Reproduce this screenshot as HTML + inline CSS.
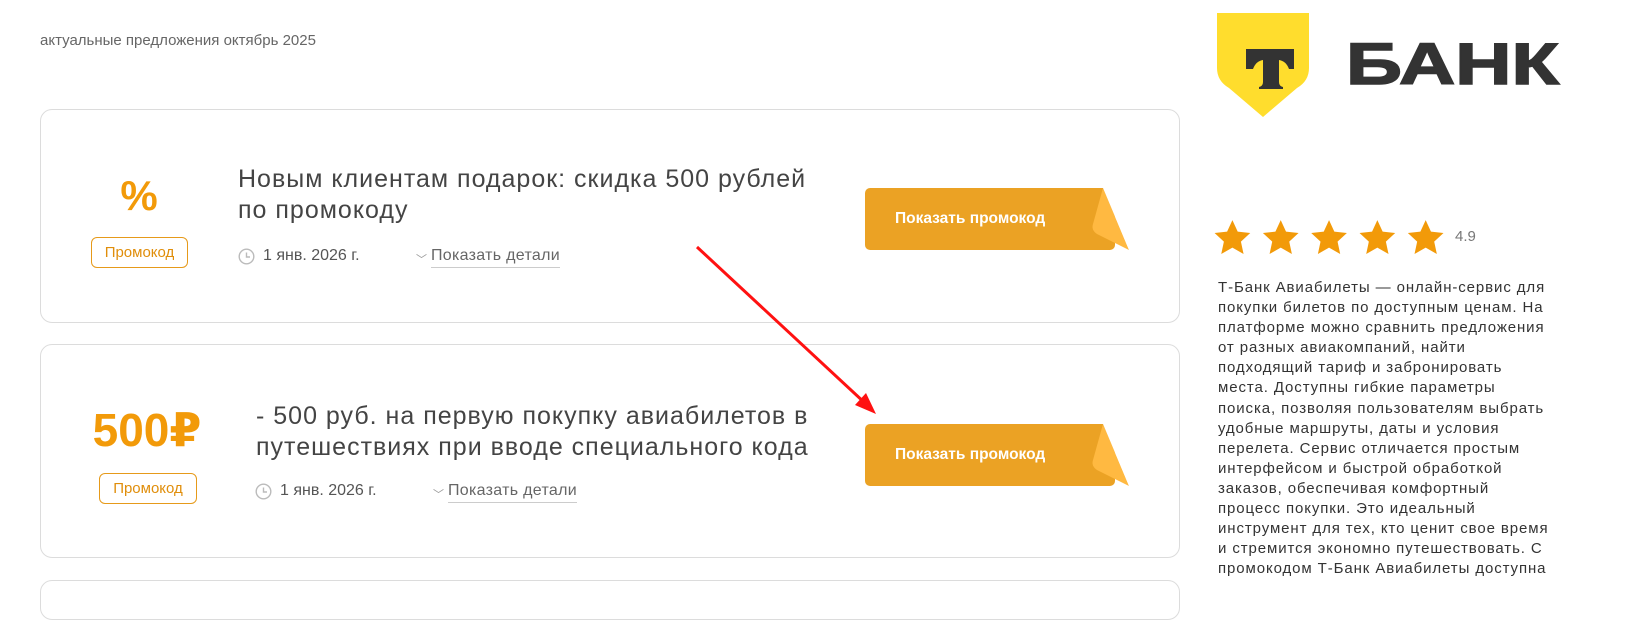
<!DOCTYPE html>
<html lang="ru"><head><meta charset="utf-8">
<style>
*{margin:0;padding:0;box-sizing:border-box}
body{width:1635px;height:581px;overflow:hidden;background:#fff;font-family:"Liberation Sans","DejaVu Sans",sans-serif;position:relative;color:#444}
.abs{position:absolute}
.card{position:absolute;left:40px;width:1140px;border:1px solid #dcdcdc;border-radius:12px;background:#fff}
.badge{position:absolute;border:1px solid #e69a1a;border-radius:6px;color:#e08e0b;font-size:15px;text-align:center;line-height:29px;height:31px}
.big{position:absolute;color:#f29a09;font-weight:bold;text-align:center}
.title{position:absolute;font-size:25px;letter-spacing:1px;line-height:31px;color:#444;white-space:nowrap}
.meta{position:absolute;font-size:16px;color:#555;white-space:nowrap}
.det{position:absolute;font-size:16px;letter-spacing:0.3px;color:#666;border-bottom:1px solid #ccc;padding-bottom:2px;white-space:nowrap}
.chev{position:absolute;font-size:11px;color:#999}
.btn{position:absolute;width:264px;height:62px}
.btn span{position:absolute;left:30px;top:0;line-height:62px;color:#fff;font-size:15.5px;font-weight:bold}
.side{position:absolute;left:1218px;top:278px;font-size:15px;letter-spacing:0.9px;line-height:20.1px;color:#333;white-space:nowrap}
</style></head><body>
<div class="abs" style="left:40px;top:32px;font-size:15px;color:#666">актуальные предложения октябрь 2025</div>

<div class="card" style="top:109px;height:214px"></div>
<div class="big" style="left:99px;width:80px;top:172px;font-size:42px">%</div>
<div class="badge" style="left:91px;top:237px;width:97px">Промокод</div>
<div class="title" style="left:238px;top:164px">Новым клиентам подарок: скидка 500 рублей<br>по промокоду</div>
<svg class="abs" style="left:238px;top:248px" width="17" height="17" viewBox="0 0 17 17"><circle cx="8.5" cy="8.5" r="7.3" fill="none" stroke="#bbb" stroke-width="1.4"/><path d="M8.5 4.5V9h3.5" fill="none" stroke="#bbb" stroke-width="1.4"/></svg>
<div class="meta" style="left:263px;top:247px">1 янв. 2026 г.</div>
<div class="chev" style="left:416px;top:251px">﹀</div>
<div class="det" style="left:431px;top:247px">Показать детали</div>
<svg class="btn" style="left:865px;top:188px" viewBox="0 0 264 62"><rect x="0" y="0" width="250" height="62" rx="5" fill="#eba224"/><path d="M238 0 L264 62 L232 46 Q226 42 228 36 Z" fill="#ffb941"/><path d="M238 0 L250 0 L264 62 Z" fill="#fff"/></svg>
<div class="btn" style="left:865px;top:188px"><span>Показать промокод</span></div>

<div class="card" style="top:344px;height:214px"></div>
<div class="big" style="left:72px;width:150px;top:403px;font-size:46px">500₽</div>
<div class="badge" style="left:99px;top:473px;width:98px">Промокод</div>
<div class="title" style="left:256px;top:401px">- 500 руб. на первую покупку авиабилетов в<br>путешествиях при вводе специального кода</div>
<svg class="abs" style="left:255px;top:483px" width="17" height="17" viewBox="0 0 17 17"><circle cx="8.5" cy="8.5" r="7.3" fill="none" stroke="#bbb" stroke-width="1.4"/><path d="M8.5 4.5V9h3.5" fill="none" stroke="#bbb" stroke-width="1.4"/></svg>
<div class="meta" style="left:280px;top:482px">1 янв. 2026 г.</div>
<div class="chev" style="left:433px;top:486px">﹀</div>
<div class="det" style="left:448px;top:482px">Показать детали</div>
<svg class="btn" style="left:865px;top:424px" viewBox="0 0 264 62"><rect x="0" y="0" width="250" height="62" rx="5" fill="#eba224"/><path d="M238 0 L264 62 L232 46 Q226 42 228 36 Z" fill="#ffb941"/><path d="M238 0 L250 0 L264 62 Z" fill="#fff"/></svg>
<div class="btn" style="left:865px;top:424px"><span>Показать промокод</span></div>

<div class="card" style="top:580px;height:40px"></div>

<svg class="abs" style="left:0;top:0" width="1635" height="581"><line x1="697" y1="247" x2="866" y2="404" stroke="#f11" stroke-width="3"/><path d="M876 414 L855 405 L866 393 Z" fill="#f11"/></svg>

<svg class="abs" style="left:1217px;top:13px" width="93" height="104" viewBox="0 0 93 104"><path d="M0 0H92V55Q92 68 80 75L46 104L12 75Q0 68 0 55Z" fill="#ffdd2d"/><path d="M29 36H77V56H72Q69 48 62 47V69Q62 73 66 74V76H42V74Q46 73 46 69V47Q39 48 36 56H29Z" fill="#333"/></svg>
<svg class="abs" style="left:1340px;top:30px" width="230" height="60"><text x="6" y="54" font-family="Liberation Sans, sans-serif" font-weight="bold" font-size="58" fill="#333" stroke="#333" stroke-width="1.5" textLength="213" lengthAdjust="spacingAndGlyphs">БАНК</text></svg>

<svg class="abs" style="left:1214px;top:219px" width="260" height="38" viewBox="0 0 226 33">
<g fill="#f29a09">
<path id="s" d="M16 1l4.6 10 10.9 1.2-8.1 7.4 2.3 10.8L16 24.9 6.3 30.4 8.6 19.6.5 12.2 11.4 11z"/>
<use href="#s" x="42"/><use href="#s" x="84"/><use href="#s" x="126"/><use href="#s" x="168"/>
</g></svg>
<div class="abs" style="left:1455px;top:228px;font-size:15px;color:#777">4.9</div>

<div class="side">Т-Банк Авиабилеты — онлайн-сервис для<br>покупки билетов по доступным ценам. На<br>платформе можно сравнить предложения<br>от разных авиакомпаний, найти<br>подходящий тариф и забронировать<br>места. Доступны гибкие параметры<br>поиска, позволяя пользователям выбрать<br>удобные маршруты, даты и условия<br>перелета. Сервис отличается простым<br>интерфейсом и быстрой обработкой<br>заказов, обеспечивая комфортный<br>процесс покупки. Это идеальный<br>инструмент для тех, кто ценит свое время<br>и стремится экономно путешествовать. С<br>промокодом Т-Банк Авиабилеты доступна</div>
</body></html>
